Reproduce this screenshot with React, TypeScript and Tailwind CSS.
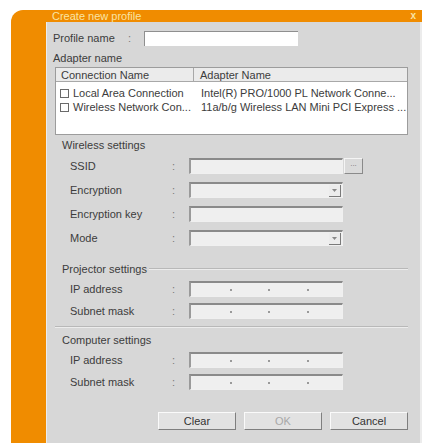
import React from 'react';

function Sunken({ className = '', children }: { className?: string; children?: React.ReactNode }) {
  return (
    <div
      className={`relative h-[16px] w-[154px] border-t-2 border-l-2 border-t-[#8a8a8a] border-l-[#9a9a9a] border-b border-r border-b-[#f0f0f0] border-r-[#f0f0f0] bg-[#efefef] ${className}`}
    >
      {children}
    </div>
  );
}

function IpBox() {
  return (
    <Sunken className="flex items-center">
      <span className="absolute left-[39px] top-[6px] h-[2px] w-[2px] bg-[#9a9a9a]" />
      <span className="absolute left-[77px] top-[6px] h-[2px] w-[2px] bg-[#9a9a9a]" />
      <span className="absolute left-[116px] top-[6px] h-[2px] w-[2px] bg-[#9a9a9a]" />
    </Sunken>
  );
}

function Dropdown() {
  return (
    <Sunken>
      <div className="absolute right-[1px] top-[1px] flex h-[12px] w-[12px] items-center justify-center border-r border-b border-[#7a7a7a] bg-[#ececec]">
        <svg width="5" height="3" viewBox="0 0 5 3">
          <path d="M0 0h5L2.5 3z" fill="#8a8a8a" />
        </svg>
      </div>
    </Sunken>
  );
}

function Field({ label, children }: { label: string; children: React.ReactNode }) {
  return (
    <div className="flex h-[16px] items-center">
      <span className="w-[102px] pl-[23px] box-content">{label}</span>
      <span className="w-[17px] text-[#7a7a7a]">:</span>
      {children}
    </div>
  );
}

function Button({ label, disabled = false }: { label: string; disabled?: boolean }) {
  return (
    <div
      className={`flex h-[18px] w-[78px] items-center justify-center border border-t-[#fafafa] border-l-[#fafafa] border-b-[#7f7f7f] border-r-[#7f7f7f] bg-[#e2e2e2] ${disabled ? 'text-[#a8a8a8]' : 'text-[#333]'}`}
    >
      {label}
    </div>
  );
}

export default function App() {
  return (
    <div className="h-[443px] w-[426px] overflow-hidden bg-white pl-[11px] pt-[10px] font-['Liberation_Sans',Arial,sans-serif] text-[11px] leading-[12px] text-[#3c3c3c]">
      <div className="flex h-[433px] w-[411px] flex-col rounded-tl-[12px] bg-[#f08c00]">
        <div className="flex h-[12px] items-center justify-between pl-[41px] pr-[6px] text-[#f9e4a4]">
          <span>Create new profile</span>
          <span className="font-bold text-[10px]">x</span>
        </div>
        <div className="flex flex-1">
          <div className="mb-[4px] w-[35px] bg-[#f08c00]" />
          <div className="flex flex-1 flex-col border-l border-[#ececec] border-r-2 border-r-[#ececec] bg-[#d7d7d7] pr-[12px]">
            <div className="mt-[9px] flex h-[14px] items-center">
              <span className="w-[75px] pl-[6px] box-content">Profile name</span>
              <span className="w-[16px] text-[#7a7a7a]">:</span>
              <div className="h-[15px] w-[154px] border-t border-l border-[#8f8f8f] bg-white" />
            </div>
            <div className="mt-[7px] pl-[6px]">Adapter name</div>
            <div className="ml-[8px] mt-[3px] flex flex-col border border-[#9c9c9c] bg-white">
              <div className="flex h-[14px] items-center border-b border-[#a8a8a8] bg-[#ebebeb]">
                <div className="h-full w-[138px] border-r border-[#a8a8a8] pl-[5px] leading-[14px]">Connection Name</div>
                <div className="pl-[6px]">Adapter Name</div>
              </div>
              <div className="flex h-[52px] flex-col pt-[4px]">
                {[
                  ['Local Area Connection', 'Intel(R) PRO/1000 PL Network Conne...'],
                  ['Wireless Network Con...', '11a/b/g Wireless LAN Mini PCI Express ...'],
                ].map(([a, b]) => (
                  <div key={a} className="flex h-[14px] items-center">
                    <div className="ml-[4px] h-[9px] w-[9px] border border-[#6a6a6a] bg-white" />
                    <span className="ml-[4px] w-[128px]">{a}</span>
                    <span className="whitespace-nowrap">{b}</span>
                  </div>
                ))}
              </div>
            </div>

            <div className="mt-[4px] pl-[15px] leading-[12px]">Wireless settings</div>
            <div className="mt-[7px] flex flex-col gap-[8px]">
              <Field label="SSID">
                <Sunken />
                <div className="ml-[1px] flex h-[16px] w-[19px] items-start justify-center border border-t-[#f4f4f4] border-l-[#f4f4f4] border-b-[#8a8a8a] border-r-[#8a8a8a] bg-[#dadada] text-[8px] leading-[10px] text-[#777]">
                  ...
                </div>
              </Field>
              <Field label="Encryption">
                <Dropdown />
              </Field>
              <Field label="Encryption key">
                <Sunken />
              </Field>
              <Field label="Mode">
                <Dropdown />
              </Field>
            </div>

            <div className="mt-[17px] flex items-center pl-[15px]">
              <span>Projector settings</span>
              <div className="ml-[2px] flex-1 border-t border-[#b8b8b8] border-b border-b-[#ececec]" />
            </div>
            <div className="mt-[6px] flex flex-col gap-[6px]">
              <Field label="IP address">
                <IpBox />
              </Field>
              <Field label="Subnet mask">
                <IpBox />
              </Field>
            </div>

            <div className="ml-[8px] mt-[7px] border-t border-[#b8b8b8] border-b border-b-[#ececec]" />
            <div className="mt-[6px] pl-[15px]">Computer settings</div>
            <div className="mt-[6px] flex flex-col gap-[6px]">
              <Field label="IP address">
                <IpBox />
              </Field>
              <Field label="Subnet mask">
                <IpBox />
              </Field>
            </div>

            <div className="mt-[22px] flex justify-end gap-[8px]">
              <Button label="Clear" />
              <Button label="OK" disabled />
              <Button label="Cancel" />
            </div>
          </div>
        </div>
      </div>
    </div>
  );
}
